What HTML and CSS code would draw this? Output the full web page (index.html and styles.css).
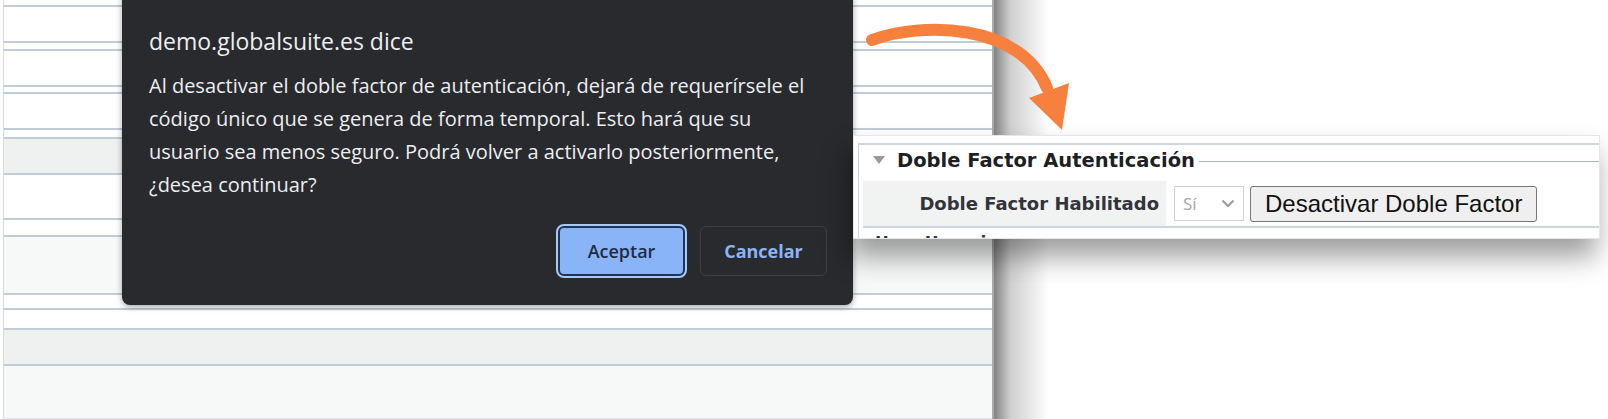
FILE: index.html
```html
<!DOCTYPE html>
<html lang="es">
<head>
    <meta charset="UTF-8">
    <meta name="viewport" content="width=device-width, initial-scale=1.0">
    <title>Desactivar doble factor</title>
    <link rel="stylesheet" href="styles.css">
</head>
<body>
    <div class="stage">
        <!-- page behind the alert -->
        <div class="sheet">
            <div class="line"></div>
            <div class="line"></div>
            <div class="line"></div>
            <div class="line"></div>
            <div class="line"></div>
            <div class="line"></div>
            <div class="line"></div>
            <div class="line grey"></div>
            <div class="line"></div>
            <div class="line"></div>
            <div class="line soft"></div>
            <div class="line"></div>
            <div class="line"></div>
            <div class="line grey"></div>
            <div class="line soft last"></div>
        </div>
        <div class="backdrop">
            <div class="edge-shadow"></div>
        </div>

        <!-- browser alert -->
        <div class="dialog">
            <div class="dialog-title">demo.globalsuite.es dice</div>
            <p class="dialog-text">Al desactivar el doble factor de autenticación, dejará de requerírsele el código único que se genera de forma temporal. Esto hará que su usuario sea menos seguro. Podrá volver a activarlo posteriormente, ¿desea continuar?</p>
            <div class="dialog-actions">
                <button class="btn-primary">Aceptar</button>
                <button class="btn-secondary">Cancelar</button>
            </div>
        </div>

        <!-- zoomed detail of the form -->
        <div class="inset">
            <div class="fieldset">
                <div class="legend">
                    <span class="caret"></span>
                    <span class="legend-text">Doble Factor Autenticación</span>
                    <span class="legend-line"></span>
                </div>
                <div class="field-row">
                    <div class="field-label">Doble Factor Habilitado</div>
                    <div class="select">
                        <span>Sí</span>
                        <svg width="14" height="9" viewBox="0 0 14 9"><path d="M1.5 1.5 L7 7 L12.5 1.5" fill="none" stroke="#9a9a9a" stroke-width="2"/></svg>
                    </div>
                    <button class="btn-legacy">Desactivar Doble Factor</button>
                </div>
                <div class="next-row">Usar Usuario</div>
            </div>
        </div>

        <svg class="arrow" width="230" height="140" viewBox="850 0 230 140">
            <path d="M872 40 C920 22, 1020 22, 1047 88" fill="none" stroke="#f6803e" stroke-width="12" stroke-linecap="round"/>
            <polygon points="1029,98 1069,83 1062,130" fill="#f6803e"/>
        </svg>
    </div>
</body>
</html>
```

FILE: styles.css
```css
body {
    margin: 0;
    background: #fff;
    font-family: "Open Sans", "Noto Sans", sans-serif;
}
.stage {
    position: relative;
    display: flex;
    width: 1608px;
    height: 419px;
    overflow: hidden;
}
.sheet {
    width: 991px;
    margin-left: 3px;
    flex: none;
    display: grid;
    grid-template-rows: 7px 36px 8px 36px 7px 36px 9px 36px 45px 17px 58px 15px 20px 36px 53px;
    border-left: 1px solid #d6dade;
    border-right: 2px solid #a9abad;
    box-sizing: border-box;
    background: #fff;
}
.line {
    border-bottom: 2px solid #c0ccd8;
}
.line.grey {
    background: #eff1f1;
}
.line.soft {
    background: #f7f9f9;
}
.line.last {
    border-bottom: 1px solid #e2e6e8;
}
.backdrop {
    flex: 1;
    position: relative;
    background: #fff;
}
.edge-shadow {
    width: 55px;
    height: 100%;
    background: linear-gradient(to right, #848484, #cfcfcf 30%, #fff);
}

.dialog {
    position: absolute;
    left: 122px;
    top: -10px;
    width: 731px;
    height: 315px;
    box-sizing: border-box;
    padding: 30px 26px 0 27px;
    background: #292a2d;
    border-radius: 8px;
    box-shadow: 0 2px 6px rgba(0, 0, 0, 0.35);
    color: #eceef1;
}
.dialog-title {
    font-size: 23px;
    line-height: 28px;
    margin-top: 7px;
}
.dialog-text {
    max-width: 666px;
    margin: 14px 0 0;
    font-size: 20px;
    line-height: 33px;
}
.dialog-actions {
    display: flex;
    justify-content: flex-end;
    gap: 15px;
    margin-top: 25px;
}
.btn-primary, .btn-secondary {
    width: 127px;
    height: 50px;
    border-radius: 6px;
    font-family: "Open Sans", "Noto Sans", sans-serif;
    font-size: 18px;
    font-weight: 600;
    cursor: pointer;
}
.btn-primary {
    background: #8ab4f8;
    color: #1f2d44;
    border: 2px solid #203457;
    outline: 2px solid #a8c7fa;
    outline-offset: 0;
}
.btn-secondary {
    background: transparent;
    color: #8ab4f8;
    border: 1px solid #3c4043;
    font-weight: 700;
}

.inset {
    position: absolute;
    left: 853px;
    top: 135px;
    width: 747px;
    height: 104px;
    padding: 7px 0 0 4px;
    box-sizing: border-box;
    background: #fff;
    border: 1px solid #e4e7ea;
    box-shadow: -4px 18px 26px rgba(0, 0, 0, 0.38);
    overflow: hidden;
}
.fieldset {
    border-top: 2px solid #cdd6de;
    border-left: 1px solid #cdd6de;
    height: 100%;
    padding-left: 4px;
}
.legend {
    display: flex;
    align-items: center;
    height: 30px;
}
.caret {
    width: 0;
    height: 0;
    margin-left: 10px;
    border-left: 6px solid transparent;
    border-right: 6px solid transparent;
    border-top: 8px solid #9a9a9a;
}
.legend-text {
    margin-left: 12px;
    font-family: "DejaVu Sans", sans-serif;
    font-size: 19.5px;
    font-weight: 700;
    color: #1e1f24;
}
.legend-line {
    flex: 1;
    height: 1px;
    margin: 2px 0 0 4px;
    background: #a9b7c4;
}
.field-row {
    display: flex;
    align-items: center;
    gap: 8px;
    height: 45px;
    margin-top: 6px;
    border-bottom: 2px solid #cdd6de;
}
.field-label {
    width: 303px;
    height: 100%;
    box-sizing: border-box;
    padding-right: 7px;
    display: flex;
    align-items: center;
    justify-content: flex-end;
    background: #f1f3f3;
    font-family: "DejaVu Sans", sans-serif;
    font-size: 18px;
    font-weight: 700;
    color: #33343a;
}
.select {
    width: 70px;
    height: 35px;
    box-sizing: border-box;
    border: 1px solid #cfd3d6;
    display: flex;
    align-items: center;
    justify-content: space-between;
    padding: 0 8px;
    color: #a6a6a6;
    font-size: 17px;
}
.btn-legacy {
    margin-left: -2px;
    height: 36px;
    padding: 0 14px;
    background: #efefef;
    border: 1px solid #767676;
    border-radius: 3px;
    font-family: "Liberation Sans", Arial, sans-serif;
    font-size: 24px;
    color: #111;
}
.next-row {
    padding: 5px 0 0 12px;
    font-family: "DejaVu Sans", sans-serif;
    font-size: 17px;
    font-weight: 700;
    color: #33343a;
}

.arrow {
    position: absolute;
    left: 850px;
    top: 0;
}
```
